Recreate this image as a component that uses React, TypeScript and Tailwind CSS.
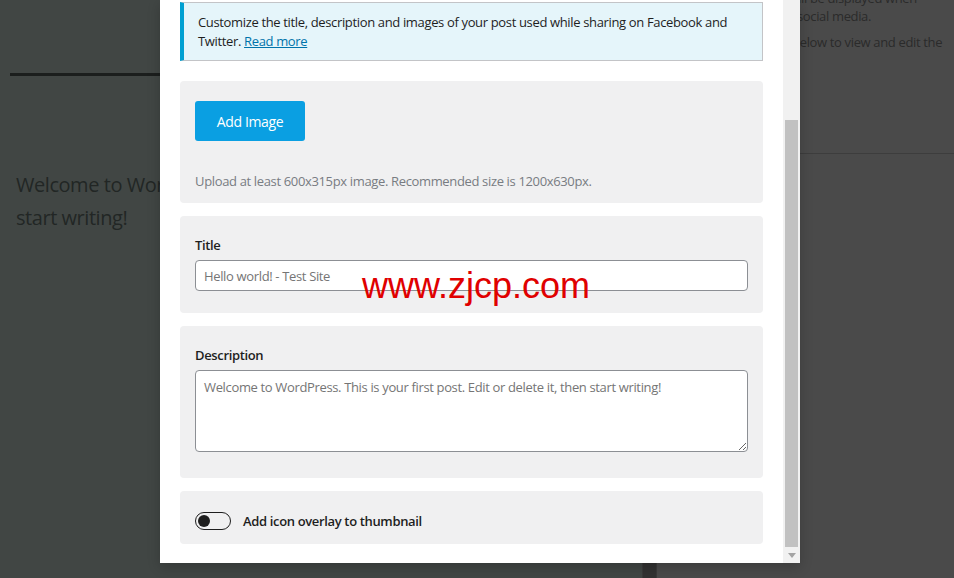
import React from "react";

export default function App() {
  return (
    <div className="relative w-[954px] h-[578px] overflow-hidden flex font-['Open_Sans',sans-serif] tracking-[-0.35px]">
      {/* Editor (dimmed) */}
      <div className="w-[642px] h-full bg-[#414644] pt-[73px] pl-[10px]">
        <div className="h-[3px] bg-[#1b1e1d]" />
        <div className="mt-[92px] pl-[6px] text-[20px] leading-[33px] text-[#222625] whitespace-nowrap tracking-[-0.45px]">
          Welcome to WordPress. This is your first post. Edit or delete it, then
          <br />
          start writing!
        </div>
      </div>
      {/* Divider */}
      <div className="w-[15px] h-full bg-[#323232] border-x border-[#3a3a3a]" />
      {/* Sidebar (dimmed) */}
      <div className="flex-1 h-full bg-[#4a4a4a] flex flex-col">
        <div className="h-[154px] border-b border-[#3d3d3d] text-[13px] leading-[18px] text-[#2b2b2b] whitespace-nowrap">
          <div className="mt-[-11px] pl-[8px]">This is how your post will be displayed when</div>
          <div className="pl-[22px]">it is when shared on social media.</div>
          <div className="mt-[8px] pl-[22px]">Click on the section below to view and edit the</div>
        </div>
        <div className="flex-1" />
      </div>

      {/* Modal */}
      <div className="absolute left-[160px] top-0 w-[640px] h-[563px] bg-white flex shadow-[0_4px_12px_rgba(0,0,0,0.2)]">
        <div className="flex-1 px-5 pt-[2px] overflow-hidden">
          <div className="border border-[#c3c4c7] border-l-4 border-l-[#00a0d2] bg-[#e5f5fa] pl-[14px] pr-3 pt-[10px] pb-[9px] text-[13px] leading-[19px] text-[#1e1e1e] whitespace-nowrap">
            Customize the title, description and images of your post used while sharing on Facebook and
            <br />
            Twitter. <span className="text-[#0073aa] underline">Read more</span>
          </div>

          <div className="mt-[20px] bg-[#f0f0f1] rounded pt-5 px-[15px] pb-[12px]">
            <button className="h-10 w-[110px] rounded-[3px] bg-[#0a9fe2] text-white text-[14px] tracking-[-0.35px]">
              Add Image
            </button>
            <div className="mt-[30px] text-[13px] leading-[20px] text-[#787c82]">
              Upload at least 600x315px image. Recommended size is 1200x630px.
            </div>
          </div>

          <div className="mt-[13px] bg-[#f0f0f1] rounded pt-5 px-[15px] pb-[22px]">
            <div className="text-[13px] leading-[18px] font-semibold text-[#1e1e1e] mb-[6px]">Title</div>
            <input
              className="w-full h-[31px] border border-[#8c8f94] rounded bg-white px-2 text-[13px] tracking-[-0.35px] text-[#1e1e1e] placeholder:text-[#757575] outline-none"
              placeholder="Hello world! - Test Site"
            />
          </div>

          <div className="mt-[13px] bg-[#f0f0f1] rounded pt-5 px-[15px] pb-[26px]">
            <div className="text-[13px] leading-[18px] font-semibold text-[#1e1e1e] mb-[6px]">Description</div>
            <textarea
              className="block w-full h-[82px] border border-[#8c8f94] rounded bg-white px-2 py-[6px] text-[13px] leading-[20px] tracking-[-0.35px] text-[#1e1e1e] placeholder:text-[#757575] outline-none"
              placeholder="Welcome to WordPress. This is your first post. Edit or delete it, then start writing!"
            />
          </div>

          <div className="mt-[13px] bg-[#f0f0f1] rounded pt-[20px] pb-[14px] px-[15px] flex items-center gap-3">
            <div className="w-9 h-[18px] rounded-full border border-[#1e1e1e] flex items-center pl-[2px]">
              <div className="w-3 h-3 rounded-full bg-[#1e1e1e]" />
            </div>
            <span className="text-[13px] leading-[18px] font-semibold text-[#1e1e1e] pt-[1px]">Add icon overlay to thumbnail</span>
          </div>
        </div>

        {/* Scrollbar */}
        <div className="w-[17px] h-full bg-[#f1f1f1] flex flex-col items-center">
          <div className="h-[120px]" />
          <div className="w-[13px] h-[427px] bg-[#c1c1c1]" />
          <div className="flex-1 flex items-center justify-center">
            <svg width="8" height="5" viewBox="0 0 8 5">
              <path d="M0 0 H8 L4 5 Z" fill="#a3a3a3" />
            </svg>
          </div>
        </div>
      </div>

      {/* Watermark */}
      <div className="absolute left-[362px] top-[268px] leading-none text-[36px] tracking-normal text-[#e00000] font-['Liberation_Sans',sans-serif]">
        www.zjcp.com
      </div>
    </div>
  );
}
